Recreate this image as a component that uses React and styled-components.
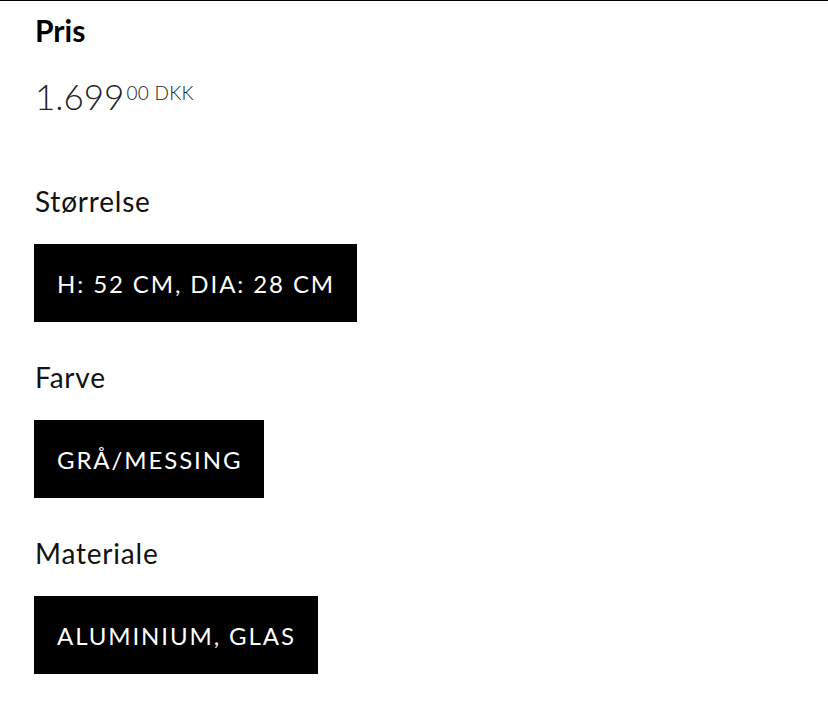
import React from 'react';
import styled, { createGlobalStyle } from 'styled-components';

const GlobalStyle = createGlobalStyle`
  html, body {
    margin: 0;
    padding: 0;
    background: #fff;
  }
  body {
    font-family: Lato, "Liberation Sans", sans-serif;
    color: #111;
  }
`;

const Page = styled.div`
  border-top: 1px solid #000;
  padding: 10px 35px 40px;
  min-height: 719px;
  box-sizing: border-box;
`;

const Heading = styled.h2`
  margin: 0;
  font-size: 30px;
  font-weight: 700;
  line-height: 38px;
  color: #000;
`;

const Price = styled.div`
  display: flex;
  align-items: flex-start;
  margin-top: 31px;
  color: #222;
  font-weight: 300;
`;

const Amount = styled.span`
  font-size: 35px;
  line-height: 32px;
`;

const Decimals = styled.span`
  font-size: 19px;
  line-height: 18px;
  margin-left: 2px;
  margin-top: 4px;
  letter-spacing: 0.3px;
`;

const Group = styled.section`
  margin-top: ${p => p.$first ? '74px' : '40px'};
`;

const Label = styled.div`
  font-size: 28px;
  line-height: 30px;
  letter-spacing: 0.8px;
  color: #111;
  margin-bottom: 28px;
`;

const Chip = styled.div`
  display: inline-flex;
  align-items: center;
  height: 78px;
  padding: 0 22px 0 23px;
  background: #000;
  color: #fff;
  font-size: 24px;
  font-weight: 400;
  letter-spacing: 1.9px;
  box-sizing: border-box;
  margin-left: -1px;
`;

const attributes = [
  { label: 'Størrelse', value: 'H: 52 CM, DIA: 28 CM' },
  { label: 'Farve', value: 'GRÅ/MESSING' },
  { label: 'Materiale', value: 'ALUMINIUM, GLAS' },
];

export default function App() {
  return (
    <>
      <GlobalStyle />
      <Page>
        <Heading>Pris</Heading>
        <Price>
          <Amount>1.699</Amount>
          <Decimals>00 DKK</Decimals>
        </Price>
        {attributes.map((a, i) => (
          <Group key={a.label} $first={i === 0}>
            <Label>{a.label}</Label>
            <Chip>{a.value}</Chip>
          </Group>
        ))}
      </Page>
    </>
  );
}
